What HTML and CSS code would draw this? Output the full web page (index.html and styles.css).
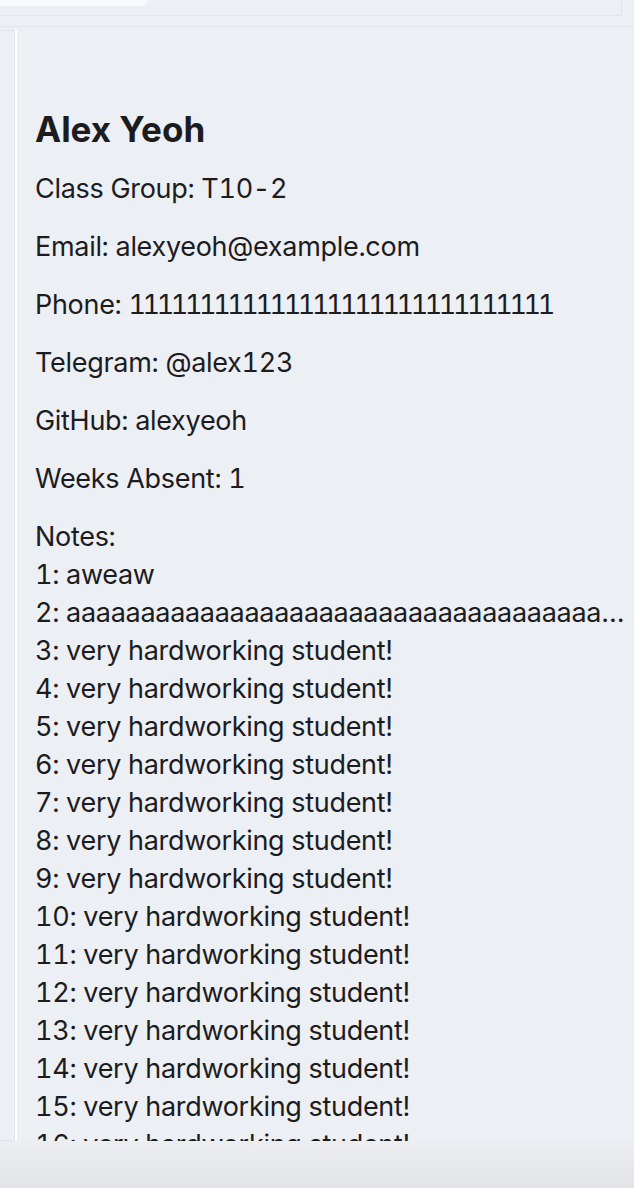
FILE: index.html
```html
<!DOCTYPE html>
<html>
<head>
<meta charset="utf-8">
<link rel="stylesheet" href="styles.css">
</head>
<body>
<div class="app">
  <div class="top">
    <div class="tabbox"><div class="tab"></div></div>
  </div>
  <div class="main">
    <div class="list"></div>
    <div class="detail">
      <h1 class="name">Alex Yeoh</h1>
      <p class="field">Class Group: T10-2</p>
      <p class="field">Email: alexyeoh@example.com</p>
      <p class="field">Phone: <span class="digits">111111111111111111111111111111</span></p>
      <p class="field">Telegram: @alex123</p>
      <p class="field">GitHub: alexyeoh</p>
      <p class="field">Weeks Absent: 1</p>
      <div class="notes">
        <div class="line">Notes:</div>
        <div class="line">1: aweaw</div>
        <div class="line">2: aaaaaaaaaaaaaaaaaaaaaaaaaaaaaaaaaaaaaaaaaaaaaaaaaaaaaaaaaaaaaaa</div>
        <div class="line">3: very hardworking student!</div>
        <div class="line">4: very hardworking student!</div>
        <div class="line">5: very hardworking student!</div>
        <div class="line">6: very hardworking student!</div>
        <div class="line">7: very hardworking student!</div>
        <div class="line">8: very hardworking student!</div>
        <div class="line">9: very hardworking student!</div>
        <div class="line">10: very hardworking student!</div>
        <div class="line">11: very hardworking student!</div>
        <div class="line">12: very hardworking student!</div>
        <div class="line">13: very hardworking student!</div>
        <div class="line">14: very hardworking student!</div>
        <div class="line">15: very hardworking student!</div>
        <div class="line">16: very hardworking student!</div>
        <div class="line">17: very hardworking student!</div>
      </div>
    </div>
  </div>
  <div class="bottom"></div>
</div>
</body>
</html>
```

FILE: styles.css
```css
html, body {
  margin: 0;
  padding: 0;
  background: #eceff4;
}
.app {
  width: 634px;
  height: 1188px;
  display: flex;
  flex-direction: column;
  overflow: hidden;
  font-family: Inter, "Noto Sans", sans-serif;
  color: #1c1c1e;
}
.top {
  height: 26px;
  border-bottom: 1px solid #e1e4ea;
  flex: none;
}
.tabbox {
  width: 621px;
  height: 15px;
  border-right: 1px solid #e1e4ea;
  border-bottom: 1px solid #e1e4ea;
}
.tab {
  width: 148px;
  height: 6px;
  background: #f8f9fb;
  border-bottom-right-radius: 6px;
}
.main {
  flex: 1;
  display: flex;
  margin-top: 3px;
  min-height: 0;
  overflow: hidden;
}
.list {
  width: 15px;
  flex: none;
  border-top: 1px solid #e1e4ea;
  border-right: 1px solid #e1e4ea;
  border-bottom: 1px solid #e1e4ea;
  box-sizing: border-box;
}
.detail {
  flex: 1;
  min-width: 0;
  border-left: 2px solid #ffffff;
  padding: 77px 6px 0 18px;
  overflow: hidden;
}
.name {
  margin: 0 0 19px;
  font-size: 35px;
  font-weight: 700;
  line-height: 44px;
  letter-spacing: 0;
}
.field {
  margin: 0 0 20px;
  font-size: 27px;
  line-height: 38px;
  letter-spacing: -0.3px;
  font-feature-settings: "tnum" 1;
}
.digits {
  letter-spacing: -3.4px;
}
.notes {
  font-size: 27px;
  line-height: 38px;
  letter-spacing: -0.3px;
  font-feature-settings: "tnum" 1;
}
.line {
  white-space: nowrap;
  overflow: hidden;
  text-overflow: ellipsis;
}
.bottom {
  height: 47px;
  flex: none;
  background: linear-gradient(#eceef1, #e2e3e6);
}
```
